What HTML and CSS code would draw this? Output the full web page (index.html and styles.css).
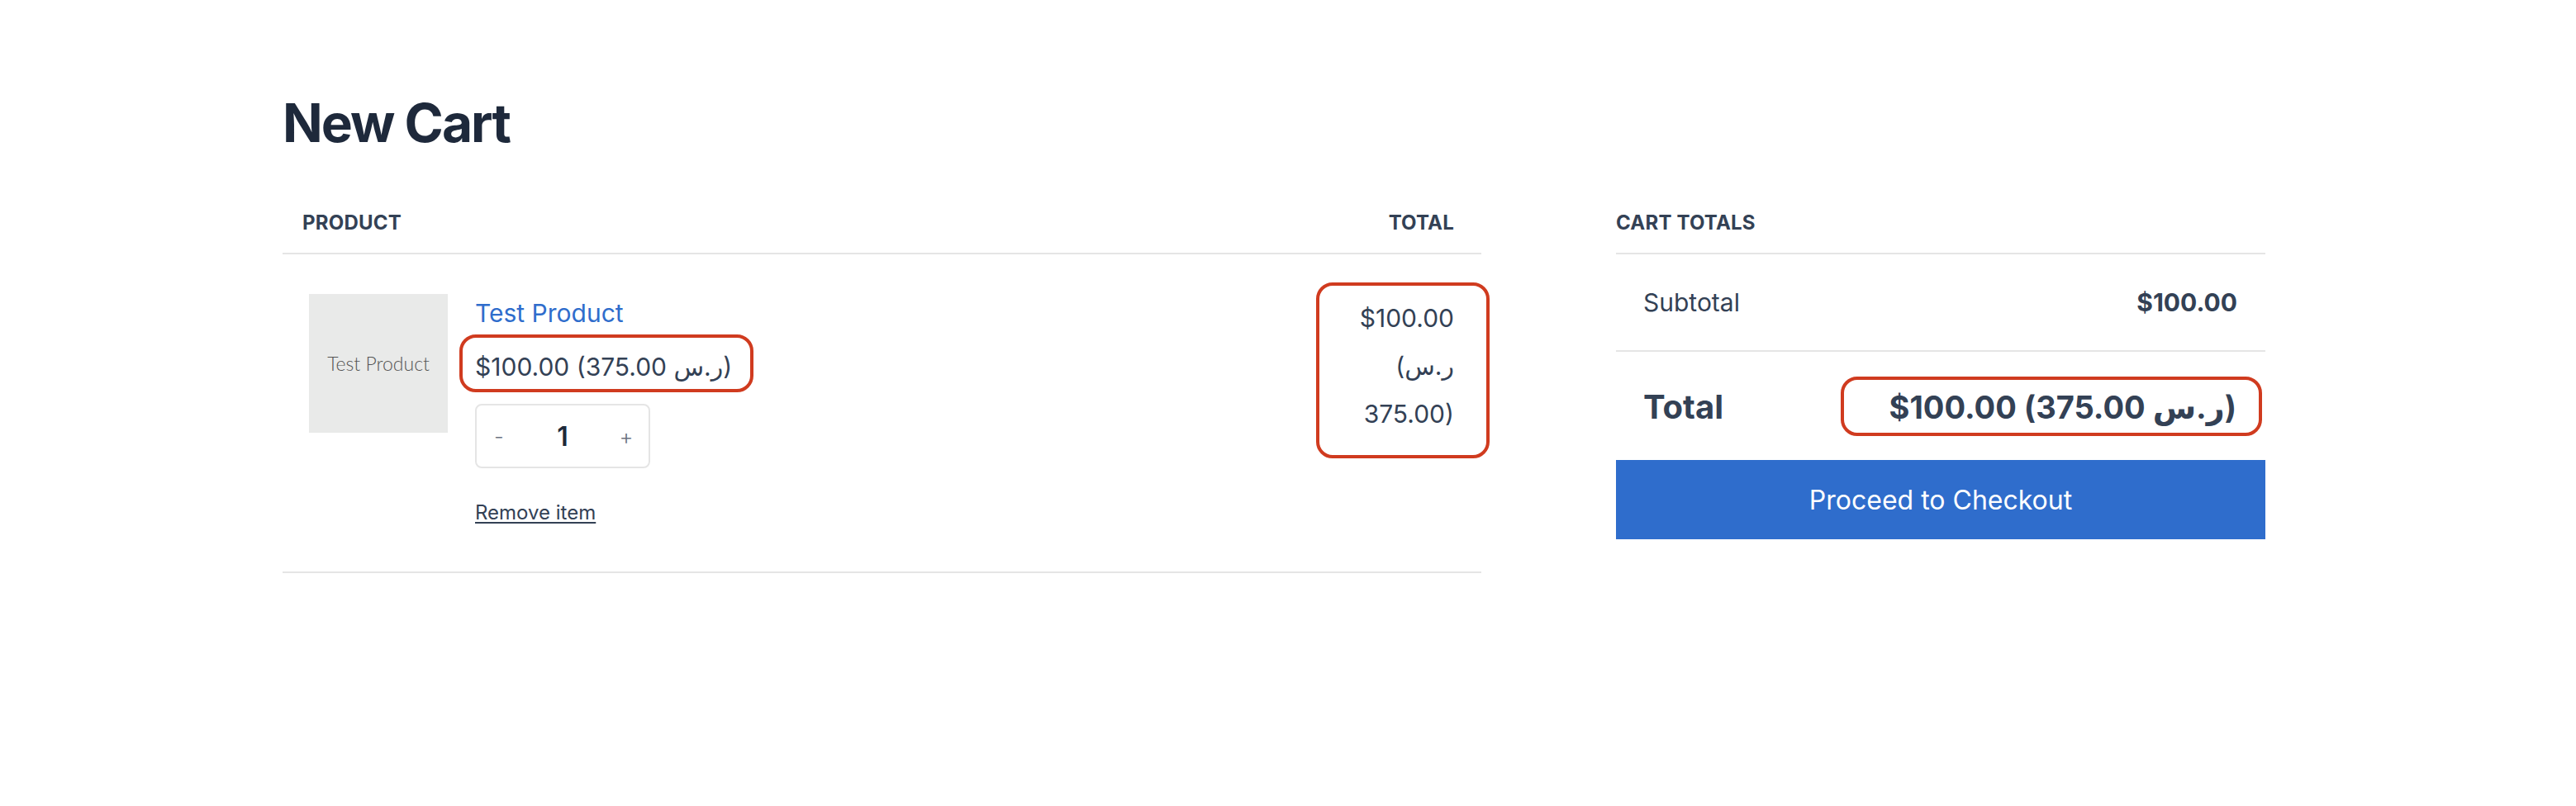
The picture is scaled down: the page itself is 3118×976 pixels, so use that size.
FILE: index.html
```html
<!DOCTYPE html>
<html lang="en">
<head>
<meta charset="utf-8">
<title>New Cart</title>
<link rel="stylesheet" href="styles.css">
</head>
<body>
<main class="page">
  <h1 class="page-title">New Cart</h1>
  <div class="cart-layout">
    <section class="cart-items">
      <div class="items-head">
        <span class="col-label">Product</span>
        <span class="col-label">Total</span>
      </div>
      <div class="item-row">
        <div class="item-thumb"><span>Test Product</span></div>
        <div class="item-info">
          <a class="item-name" href="#">Test Product</a>
          <div class="item-price">$100.00 (ر.س 375.00)<span class="note note-price"></span></div>
          <div class="qty">
            <button class="qty-btn" type="button">-</button>
            <span class="qty-val">1</span>
            <button class="qty-btn" type="button">+</button>
          </div>
          <a class="remove" href="#">Remove item</a>
        </div>
        <div class="item-total">$100.00 (ر.س 375.00)<span class="note note-total"></span></div>
      </div>
    </section>
    <aside class="totals">
      <div class="totals-head"><span class="col-label">Cart totals</span></div>
      <div class="totals-row subtotal"><span>Subtotal</span><strong>$100.00</strong></div>
      <div class="totals-row grand"><span>Total</span><strong class="grand-val">$100.00 (ر.س 375.00)</strong><span class="note note-grand"></span></div>
      <button class="checkout" type="button">Proceed to Checkout</button>
    </aside>
  </div>
</main>
</body>
</html>
```

FILE: styles.css
```css
* { box-sizing: border-box; }

body {
  margin: 0;
  background: #ffffff;
  font-family: Inter, "DejaVu Sans", sans-serif;
  color: #334155;
}

.page {
  width: 2400px;
  margin-left: 342px;
  padding-top: 109px;
}

.page-title {
  margin: 0;
  font-size: 64px;
  line-height: 80px;
  font-weight: 700;
  color: #1e293b;
  letter-spacing: -2px;
}

.cart-layout {
  display: grid;
  grid-template-columns: 1451px 786px;
  column-gap: 163px;
  margin-top: 65px;
  align-items: start;
}

.col-label {
  font-size: 24px;
  line-height: 32px;
  font-weight: 700;
  text-transform: uppercase;
  letter-spacing: 0.2px;
  color: #334155;
}

.items-head {
  display: flex;
  justify-content: space-between;
  padding: 0 33px 20px 24px;
  border-bottom: 2px solid #e5e5e5;
}

.item-row {
  display: flex;
  align-items: flex-start;
  padding: 48px 0 55px;
  border-bottom: 2px solid #e5e5e5;
}

.item-thumb {
  width: 168px;
  height: 168px;
  margin-left: 32px;
  background: #e9eae9;
  display: flex;
  align-items: center;
  justify-content: center;
  font-family: Lato, "Open Sans", sans-serif;
  font-weight: 300;
  font-size: 23px;
  color: #555555;
}

.item-info {
  margin-left: 33px;
  display: flex;
  flex-direction: column;
  align-items: flex-start;
}

.item-name {
  font-size: 30px;
  line-height: 46px;
  color: #2f6dcc;
  text-decoration: none;
}

.item-price {
  position: relative;
  margin-top: 19px;
  font-size: 30px;
  line-height: 46px;
  color: #334155;
}

.qty {
  margin-top: 22px;
  width: 212px;
  height: 78px;
  border: 2px solid #e5e5e5;
  border-radius: 8px;
  display: grid;
  grid-template-columns: 54px 1fr 54px;
  align-items: center;
}

.qty-btn {
  border: none;
  background: none;
  padding: 0;
  font-family: Inter, sans-serif;
  font-size: 26px;
  font-weight: 300;
  color: #6b7280;
  text-align: center;
}

.qty-val {
  text-align: center;
  font-size: 32px;
  font-weight: 600;
  color: #1e293b;
}

.remove {
  margin-top: 38px;
  font-size: 24px;
  line-height: 32px;
  color: #334155;
  text-decoration: underline;
  text-underline-offset: 3px;
  text-decoration-thickness: 2px;
}

.item-total {
  position: relative;
  margin-left: auto;
  width: 163px;
  padding-right: 33px;
  text-align: right;
  font-size: 30px;
  line-height: 58px;
  color: #334155;
}

.totals-head {
  padding-bottom: 20px;
  border-bottom: 2px solid #e5e5e5;
}

.totals-row {
  display: flex;
  justify-content: space-between;
  align-items: center;
}

.subtotal {
  padding: 38px 34px 38px 33px;
  font-size: 30px;
  line-height: 40px;
  border-bottom: 2px solid #e5e5e5;
}

.subtotal strong { font-weight: 700; }

.grand {
  position: relative;
  padding: 43px 35px 40px 33px;
  font-size: 40px;
  line-height: 48px;
  font-weight: 700;
}

.grand-val {
  font-size: 38px;
  font-weight: 700;
  letter-spacing: -1px;
}

.checkout {
  display: block;
  width: 100%;
  height: 96px;
  border: none;
  background: #2f6dcc;
  color: #ffffff;
  font-family: Inter, sans-serif;
  font-size: 32px;
  font-weight: 400;
  cursor: pointer;
}

.note {
  position: absolute;
  border: 4px solid #d03b1f;
  border-radius: 20px;
  pointer-events: none;
}

.note-price { top: -16px; bottom: -8px; left: -19px; right: -26px; }
.note-total { top: -14px; bottom: -25px; left: -37px; right: -10px; }
.note-grand { top: 30px; bottom: 29px; left: 272px; right: 4px; }
```
